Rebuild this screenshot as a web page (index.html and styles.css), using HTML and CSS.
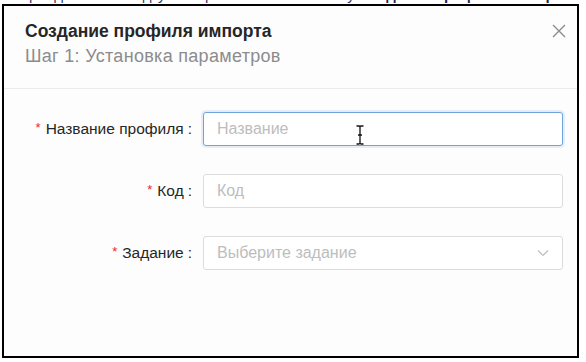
FILE: index.html
```html
<!DOCTYPE html>
<html lang="ru">
<head>
    <meta charset="UTF-8">
    <meta name="viewport" content="width=device-width, initial-scale=1.0">
    <title>Создание профиля импорта</title>
    <link rel="stylesheet" href="styles.css">
</head>
<body>
    <div class="top-strip">
        <p>Перейдите во вкладку импорта и нажмите кнопку <strong>Создание профиля импорта</strong> в правом верхнем углу страницы</p>
    </div>

    <div class="modal">
        <div class="modal-header">
            <h1 class="modal-title">Создание профиля импорта</h1>
            <p class="modal-step">Шаг 1: Установка параметров</p>
            <button class="close-btn" aria-label="Закрыть">
                <svg width="14" height="14" viewBox="0 0 14 14">
                    <path d="M1 1 L13 13 M13 1 L1 13" stroke="#8c8c8c" stroke-width="1.4" fill="none"/>
                </svg>
            </button>
        </div>

        <form class="modal-body">
            <label class="form-label" for="profileName"><span class="req">*</span>Название профиля</label>
            <div class="field">
                <input class="input focused" type="text" id="profileName" placeholder="Название">
                <svg class="ibeam" width="8" height="20" viewBox="0 0 8 20">
                    <path d="M0.5 1 H3 Q4 1 4 2.5 V17.5 Q4 19 3 19 H0.5 M7.5 1 H5 Q4 1 4 2.5 M4 17.5 Q4 19 5 19 H7.5 M2 10 H6" stroke="#111" stroke-width="1.3" fill="none"/>
                </svg>
            </div>

            <label class="form-label" for="code"><span class="req">*</span>Код</label>
            <div class="field">
                <input class="input" type="text" id="code" placeholder="Код">
            </div>

            <label class="form-label" for="task"><span class="req">*</span>Задание</label>
            <div class="field">
                <div class="select" id="task">
                    <span class="placeholder">Выберите задание</span>
                    <svg class="arrow" width="12" height="8" viewBox="0 0 12 8">
                        <path d="M1 1.5 L6 6.5 L11 1.5" stroke="#bfbfbf" stroke-width="1.2" fill="none"/>
                    </svg>
                </div>
            </div>
        </form>
    </div>
</body>
</html>
```

FILE: styles.css
```css
body {
  margin: 0;
  font-family: "Liberation Sans", Arial, sans-serif;
  background-color: #ffffff;
  color: #262626;
}

.top-strip {
  height: 4px;
  overflow: hidden;
  padding: 0 10px;
}

.top-strip p {
  margin: -13px 0 0;
  font-size: 15px;
  line-height: 16px;
  white-space: nowrap;
  color: #2a3a66;
}

.top-strip strong {
  color: #1b2750;
}

.modal {
  position: relative;
  margin: 0 7px 0 2px;
  height: 350px;
  border: 2px solid #000000;
  background-color: #fdfdfd;
}

.modal-header {
  padding: 13px 22px 20px 21px;
  border-bottom: 1px solid #ececec;
}

.modal-title {
  margin: 0;
  font-size: 17.5px;
  line-height: 24px;
  font-weight: 700;
  color: #262626;
}

.modal-step {
  margin: 2px 0 0;
  font-size: 18px;
  line-height: 23px;
  letter-spacing: 0.3px;
  color: #8c8c8c;
}

.close-btn {
  position: absolute;
  top: 18px;
  right: 11px;
  padding: 0;
  border: none;
  background: none;
  cursor: pointer;
}

.modal-body {
  display: grid;
  grid-template-columns: 188px 1fr;
  column-gap: 11px;
  row-gap: 28px;
  padding: 23px 14px 0 0;
}

.form-label {
  display: flex;
  align-items: center;
  justify-content: flex-end;
  font-size: 15.5px;
  color: #262626;
}

.form-label::after {
  content: ":";
  margin-left: 4px;
}

.req {
  color: #f5222d;
  font-size: 13px;
  margin-right: 5px;
  position: relative;
  top: -2px;
}

.field {
  position: relative;
}

.input,
.select {
  box-sizing: border-box;
  display: block;
  width: 100%;
  height: 34px;
  padding: 0 13px;
  border: 1px solid #dcdcdc;
  border-radius: 3px;
  background-color: #ffffff;
  font-family: inherit;
  font-size: 16px;
  color: #262626;
  outline: none;
}

.input::placeholder,
.placeholder {
  color: #bdbdbd;
}

.input.focused {
  border-color: #6ea6dc;
  box-shadow: 0 0 0 2px rgba(90, 150, 220, 0.15);
}

.select {
  display: flex;
  align-items: center;
  justify-content: space-between;
  padding-right: 13px;
}

.ibeam {
  position: absolute;
  left: 153px;
  top: 13px;
}
```
